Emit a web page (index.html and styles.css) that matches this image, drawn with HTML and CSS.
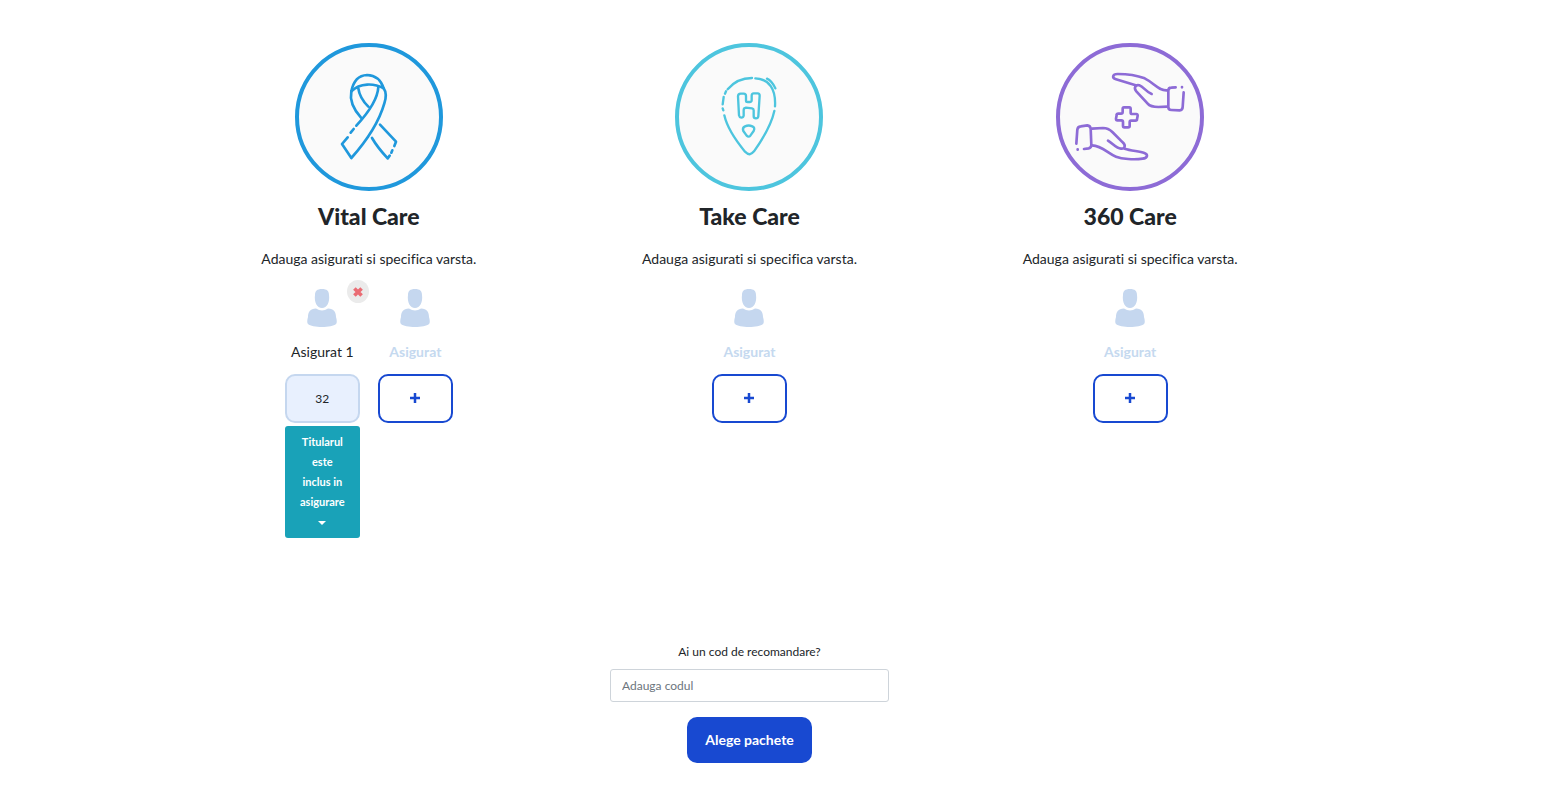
FILE: index.html
```html
<!DOCTYPE html>
<html lang="ro">
<head>
    <meta charset="UTF-8">
    <meta name="viewport" content="width=device-width, initial-scale=1.0">
    <title>Alege pachete</title>
    <link rel="stylesheet" href="styles.css">
</head>
<body>
    <svg class="sprite" aria-hidden="true">
        <symbol id="person" viewBox="0 0 30 38">
            <path d="M15 0C20 0 22 2 22 6C23 13 20 19 15 19C10 19 7 13 8 6C8 2 10 0 15 0z"/>
            <path d="M9 19.500C13 22 17 22 21 19.500C27 20 29 23 29 28C30 31 30 34 29 35C25 39 5 39 1 35C0 34 0 31 1 28C1 23 3 20 9 19.500z"/>
        </symbol>
    </svg>

    <form class="container">
        <div class="packages">
            <section class="package">
                <svg class="package-icon vital" viewBox="15 15 444 444" aria-hidden="true">
                    <circle class="ring" cx="237" cy="237" r="216"/>
                    <path d="M184 160C190 130 206 112 231 111C257 112 274 129 281 151"/>
                    <path d="M184 160C210 134 252 135 281 151C290 164 288 181 283 196C269 245 231 307 184 360L156 318L173 298"/>
                    <path d="M184 160C178 190 194 218 213 239"/>
                    <path d="M205 151C208 174 220 191 235 206M265 147C263 185 236 223 199 263M191 273L182 284"/>
                    <path d="M270 260L318 311L313 324M307 337L304 344M299 353L293 361C276 343 260 324 246 300"/>
                </svg>
                <h2 class="package-title">Vital Care</h2>
                <p class="package-text">Adauga asigurati si specifica varsta.</p>
                <div class="persons">
                    <div class="person">
                        <button type="button" class="remove" aria-label="Sterge asigurat 1">
                            <svg viewBox="0 0 10 10" aria-hidden="true"><path d="M2 2l6 6M8 2l-6 6"/></svg>
                        </button>
                        <svg class="avatar" aria-hidden="true"><use href="#person"/></svg>
                        <label class="person-name" for="age-1">Asigurat 1</label>
                        <input class="age" id="age-1" type="text" inputmode="numeric" value="32">
                        <button type="button" class="holder" aria-haspopup="true">Titularul este inclus in asigurare <span class="caret"></span></button>
                    </div>
                    <div class="person">
                        <svg class="avatar" aria-hidden="true"><use href="#person"/></svg>
                        <span class="person-name empty">Asigurat</span>
                        <button type="button" class="add" aria-label="Adauga asigurat Vital Care"><svg viewBox="0 0 10 10" aria-hidden="true"><path d="M5 0v10M0 5h10"/></svg></button>
                    </div>
                </div>
            </section>

            <section class="package">
                <svg class="package-icon take" viewBox="16 15 444 444" aria-hidden="true">
                    <circle class="ring" cx="238" cy="237" r="216"/>
                    <path d="M174 154C192 132 216 120 247 120M257 121C300 123 319 155 316 205M292 122C303 127 311 138 317 151M169 160L166 167M162 177L159 199M159 211L161 217"/>
                    <path d="M164 232C171 263 197 306 226 341C237 352 244 351 253 340C280 302 306 256 314 219"/>
                    <path d="M213 167H222Q229 167 229 174V188Q229 192 234 192H240Q246 192 246 187V173Q246 166 252 166H264Q270 166 270 173L266 235Q265 241 259 241Q252 241 252 235V217Q252 212 247 211L229 209Q222 210 222 216V233Q221 239 215 239Q209 238 208 232L205 175Q205 167 213 167Z"/>
                    <path d="M226 265Q237 260 248 265Q257 269 252 279L242 293Q237 299 231 293L221 279Q217 269 226 265Z"/>
                </svg>
                <h2 class="package-title">Take Care</h2>
                <p class="package-text">Adauga asigurati si specifica varsta.</p>
                <div class="persons">
                    <div class="person">
                        <svg class="avatar" aria-hidden="true"><use href="#person"/></svg>
                        <span class="person-name empty">Asigurat</span>
                        <button type="button" class="add" aria-label="Adauga asigurat Take Care"><svg viewBox="0 0 10 10" aria-hidden="true"><path d="M5 0v10M0 5h10"/></svg></button>
                    </div>
                </div>
            </section>

            <section class="package">
                <svg class="package-icon full" viewBox="18 15 444 444" aria-hidden="true">
                    <circle class="ring" cx="240" cy="237" r="216"/>
                    <path d="M352 157C326 159 311 134 284 121C260 112 224 108 203 108C187 108 185 120 198 124L257 142"/>
                    <path d="M305 168C288 162 281 146 268 142C257 139 250 149 259 160L293 197C301 207 314 207 325 207L352 206"/>
                    <path d="M377 148L364 149Q355 149 355 158V207Q355 216 364 216L389 217Q398 216 398 207L401 163M396 147V148"/>
                    <path d="M222 208H238Q242 208 242 213V224Q242 228 247 228H259Q263 228 263 233L261 244Q261 248 256 248H243Q239 248 239 253V264Q239 268 234 268H223Q219 268 219 263V252Q219 247 214 247H202Q198 247 198 242L200 231Q200 227 205 227H213Q218 227 218 222V213Q218 208 222 208Z"/>
                    <path d="M79 317L82 275Q83 266 92 265L112 262Q121 263 122 272L124 321Q124 329 116 331L102 333M83 334V335"/>
                    <path d="M126 272L159 270C171 270 180 275 187 282L218 313C229 323 224 333 213 332C199 331 189 317 174 308"/>
                    <path d="M224 332C243 338 267 340 283 345C296 350 292 360 278 362C251 366 216 363 198 356C172 346 158 324 126 322"/>
                </svg>
                <h2 class="package-title">360 Care</h2>
                <p class="package-text">Adauga asigurati si specifica varsta.</p>
                <div class="persons">
                    <div class="person">
                        <svg class="avatar" aria-hidden="true"><use href="#person"/></svg>
                        <span class="person-name empty">Asigurat</span>
                        <button type="button" class="add" aria-label="Adauga asigurat 360 Care"><svg viewBox="0 0 10 10" aria-hidden="true"><path d="M5 0v10M0 5h10"/></svg></button>
                    </div>
                </div>
            </section>
        </div>

        <div class="referral">
            <label for="code">Ai un cod de recomandare?</label>
            <input class="code" id="code" type="text" placeholder="Adauga codul">
            <button type="submit" class="btn">Alege pachete</button>
        </div>
    </form>
</body>
</html>
```
FILE: styles.css
```css
* {
    box-sizing: border-box;
}
body {
    margin: 0;
    padding: 43px 44px 0 0;
    background-color: #fff;
    color: #212529;
    font-family: Lato, "Liberation Sans", sans-serif;
    font-variant-ligatures: none;
}
button, input {
    font-family: inherit;
    color: inherit;
}
button {
    cursor: pointer;
}
.sprite {
    display: none;
}
.container {
    max-width: 1142px;
    margin: 0 auto;
}
.packages {
    display: grid;
    grid-template-columns: repeat(3, 1fr);
}
.package {
    display: flex;
    flex-direction: column;
    align-items: center;
}
.package-icon {
    width: 148px;
    height: 148px;
    fill: none;
    stroke: currentColor;
    stroke-width: 8;
    stroke-linecap: round;
    stroke-linejoin: round;
}
.package-icon .ring {
    fill: #fafafa;
    stroke-width: 12;
}
.vital {
    color: #1f98dc;
}
.take {
    color: #4dc5de;
    stroke-width: 7;
}
.full {
    color: #8d6bd6;
}
.package-title {
    margin: 9px 0 0;
    font-size: 23px;
    font-weight: 900;
    line-height: 32px;
}
.package-text {
    margin: 15px 0 10px;
    font-size: 14px;
    line-height: 24px;
}
.persons {
    display: flex;
    gap: 18px;
}
.person {
    position: relative;
    display: flex;
    flex-direction: column;
    align-items: center;
    width: 75px;
    padding-top: 8px;
}
.avatar {
    width: 30px;
    height: 38px;
    fill: #c5d7ef;
}
.remove {
    position: absolute;
    top: -1px;
    right: -9px;
    display: flex;
    align-items: center;
    justify-content: center;
    width: 22px;
    height: 23px;
    padding: 0;
    border: none;
    border-radius: 50%;
    background-color: #ebebeb;
}
.remove svg {
    width: 12px;
    height: 12px;
    fill: none;
    stroke: #ea6c74;
    stroke-width: 3;
}
.person-name {
    margin: 13px 0 10px;
    font-size: 14px;
    line-height: 24px;
}
.empty {
    color: #c5d9ef;
    font-weight: 700;
}
.age, .add {
    width: 100%;
    height: 49px;
    border: 2px solid #c5d7ef;
    border-radius: 10px;
    text-align: center;
    font-size: 12px;
}
.age {
    background-color: #e8f0fe;
}
.add {
    display: flex;
    align-items: center;
    justify-content: center;
    padding-bottom: 3px;
    border-color: #1849d1;
    background-color: #fff;
}
.add svg {
    width: 10px;
    height: 10px;
    stroke: #1849d1;
    stroke-width: 2.5;
}
.holder {
    width: 100%;
    height: 112px;
    margin-top: 3px;
    padding: 0 12px;
    border: none;
    border-radius: 3px;
    background-color: #19a2b8;
    color: #fff;
    font-size: 11px;
    font-weight: 700;
    line-height: 20px;
}
.caret {
    display: inline-block;
    border-top: 4px solid;
    border-right: 4px solid transparent;
    border-left: 4px solid transparent;
    vertical-align: middle;
}
.referral {
    display: flex;
    flex-direction: column;
    align-items: center;
    width: 279px;
    max-width: 100%;
    margin: 104px auto 0;
    font-size: 12px;
    line-height: 20px;
}
.code {
    width: 100%;
    height: 33px;
    margin: 7px 0 15px;
    padding: 0 11px;
    border: 1px solid #ced4da;
    border-radius: 3px;
    font-size: 12px;
}
.code::placeholder {
    color: #6c757d;
}
.btn {
    height: 46px;
    padding: 0 18px 2px;
    border: none;
    border-radius: 10px;
    background-color: #1849d1;
    color: #fff;
    font-size: 14px;
    font-weight: 700;
}
```
